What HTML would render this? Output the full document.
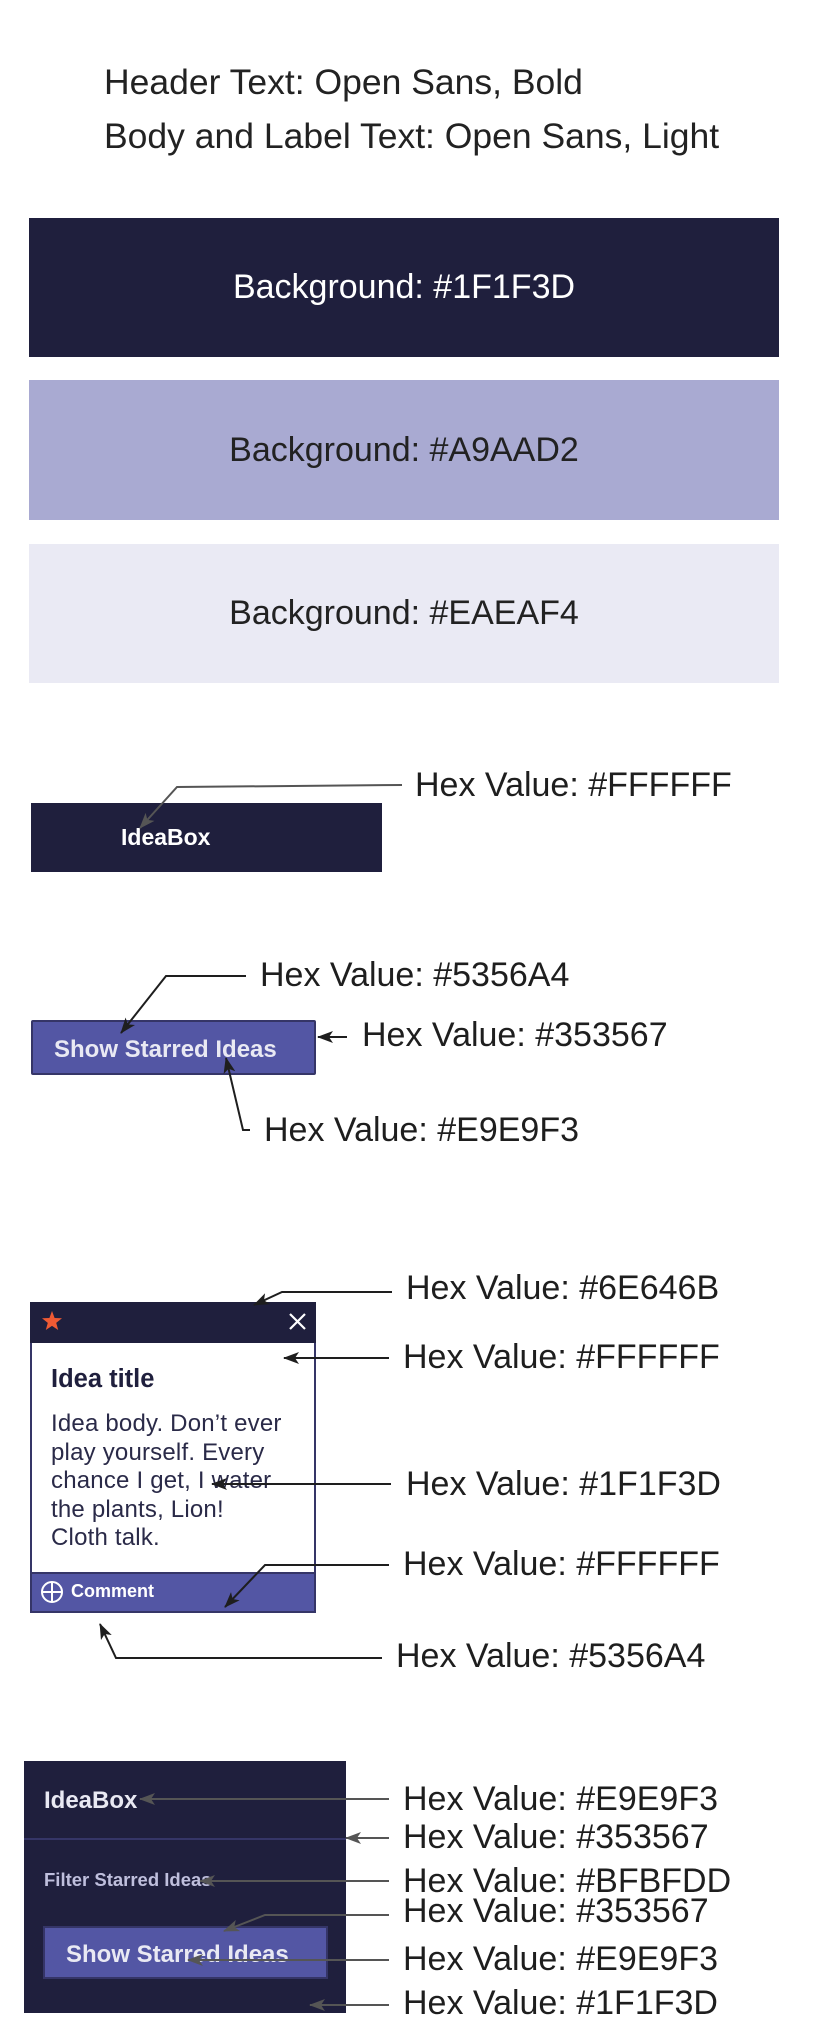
<!DOCTYPE html>
<html><head><meta charset="utf-8"><style>
*{margin:0;padding:0;box-sizing:border-box}
body{width:815px;height:2041px;background:#fff;position:relative;overflow:hidden;font-family:"Liberation Sans",sans-serif;color:#222}
.a{position:absolute;white-space:nowrap;line-height:1}
.lab{font-size:34px;color:#1e1e1e}
.band{position:absolute;left:29px;width:750px;display:flex;align-items:center;justify-content:center;font-size:34px}
.b{font-weight:bold}
</style></head><body>
<div class="a" style="left:104px;top:65px;font-size:35.5px">Header Text: Open Sans, Bold</div>
<div class="a" style="left:104px;top:119px;font-size:35.5px">Body and Label Text: Open Sans, Light</div>

<div class="band" style="top:218px;height:139px;background:#1F1F3D;color:#fff">Background: #1F1F3D</div>
<div class="band" style="top:380px;height:140px;background:#A9AAD2;color:#222">Background: #A9AAD2</div>
<div class="band" style="top:544px;height:139px;background:#EAEAF4;color:#222">Background: #EAEAF4</div>

<div class="a" style="left:31px;top:803px;width:351px;height:69px;background:#1F1F3D"></div>
<div class="a b" style="left:121px;top:826px;font-size:23px;color:#fff">IdeaBox</div>

<div class="a" style="left:31px;top:1020px;width:285px;height:55px;background:#5356A4;border:2px solid #353567;border-radius:2px"></div>
<div class="a b" style="left:54px;top:1038px;font-size:24px;color:#E9E9F3">Show Starred Ideas</div>

<div class="a" style="left:30px;top:1302px;width:286px;height:311px;background:#fff;border:2px solid #353567"></div>
<div class="a" style="left:30px;top:1302px;width:286px;height:41px;background:#1F1F3D"></div>
<div class="a" style="left:30px;top:1572px;width:286px;height:41px;background:#5356A4;border:2px solid #353567"></div>
<div class="a b" style="left:51px;top:1367px;font-size:25.5px;color:#1F1F3D">Idea title</div>
<div class="a" style="left:51px;top:1410px;font-size:24px;line-height:28.5px;color:#2a2a48;white-space:normal;width:260px;letter-spacing:0.2px">Idea body. Don’t ever<br>play yourself. Every<br>chance I get, I water<br>the plants, Lion!<br>Cloth talk.</div>
<div class="a b" style="left:71px;top:1582px;font-size:18px;color:#fff">Comment</div>

<div class="a" style="left:24px;top:1761px;width:322px;height:252px;background:#1F1F3D"></div>
<div class="a" style="left:24px;top:1838px;width:322px;height:2px;background:#353567"></div>
<div class="a b" style="left:44px;top:1789px;font-size:24px;color:#E9E9F3">IdeaBox</div>
<div class="a b" style="left:44px;top:1871px;font-size:18.5px;color:#BFBFDD">Filter Starred Ideas</div>
<div class="a" style="left:43px;top:1926px;width:285px;height:53px;background:#5356A4;border:2px solid #353567"></div>
<div class="a b" style="left:66px;top:1943px;font-size:24px;color:#E9E9F3">Show Starred Ideas</div>

<div class="a lab" style="left:415px;top:768px">Hex Value: #FFFFFF</div>
<div class="a lab" style="left:260px;top:958px">Hex Value: #5356A4</div>
<div class="a lab" style="left:362px;top:1018px">Hex Value: #353567</div>
<div class="a lab" style="left:264px;top:1113px">Hex Value: #E9E9F3</div>
<div class="a lab" style="left:406px;top:1271px">Hex Value: #6E646B</div>
<div class="a lab" style="left:403px;top:1340px">Hex Value: #FFFFFF</div>
<div class="a lab" style="left:406px;top:1467px">Hex Value: #1F1F3D</div>
<div class="a lab" style="left:403px;top:1547px">Hex Value: #FFFFFF</div>
<div class="a lab" style="left:396px;top:1639px">Hex Value: #5356A4</div>
<div class="a lab" style="left:403px;top:1782px">Hex Value: #E9E9F3</div>
<div class="a lab" style="left:403px;top:1820px">Hex Value: #353567</div>
<div class="a lab" style="left:403px;top:1864px">Hex Value: #BFBFDD</div>
<div class="a lab" style="left:403px;top:1894px">Hex Value: #353567</div>
<div class="a lab" style="left:403px;top:1942px">Hex Value: #E9E9F3</div>
<div class="a lab" style="left:403px;top:1986px">Hex Value: #1F1F3D</div>

<svg class="a" style="left:0;top:0" width="815" height="2041" viewBox="0 0 815 2041">
<defs>
<marker id="k" markerWidth="16" markerHeight="12" refX="15" refY="6" orient="auto" markerUnits="userSpaceOnUse"><path d="M0,0 L16,6 L0,12 L4,6 Z" fill="#1e1e1e"/></marker>
<marker id="g" markerWidth="16" markerHeight="12" refX="15" refY="6" orient="auto" markerUnits="userSpaceOnUse"><path d="M0,0 L16,6 L0,12 L4,6 Z" fill="#555"/></marker>
</defs>
<g fill="none" stroke-width="2">
<polyline points="402,785 177,787 140,828" stroke="#555" marker-end="url(#g)"/>
<polyline points="246,976 166,976 121,1033" stroke="#1e1e1e" marker-end="url(#k)"/>
<polyline points="347,1037 318,1037" stroke="#1e1e1e" marker-end="url(#k)"/>
<polyline points="250,1130 243,1130 226,1058" stroke="#1e1e1e" marker-end="url(#k)"/>
<polyline points="392,1292 282,1292 254,1305" stroke="#1e1e1e" marker-end="url(#k)"/>
<polyline points="389,1358 284,1358" stroke="#1e1e1e" marker-end="url(#k)"/>
<polyline points="391,1484 212,1484" stroke="#1e1e1e" marker-end="url(#k)"/>
<polyline points="389,1565 265,1565 225,1607" stroke="#1e1e1e" marker-end="url(#k)"/>
<polyline points="382,1658 116,1658 100,1624" stroke="#1e1e1e" marker-end="url(#k)"/>
<polyline points="389,1799 140,1799" stroke="#555" marker-end="url(#g)"/>
<polyline points="389,1838 346,1838" stroke="#555" marker-end="url(#g)"/>
<polyline points="389,1881 200,1881" stroke="#555" marker-end="url(#g)"/>
<polyline points="389,1915 265,1915 224,1931" stroke="#555" marker-end="url(#g)"/>
<polyline points="389,1960 188,1960" stroke="#555" marker-end="url(#g)"/>
<polyline points="389,2005 310,2005" stroke="#555" marker-end="url(#g)"/>
</g>
<path d="M52,1311 L54.6,1318 L62,1318.3 L56.2,1322.9 L58.2,1330 L52,1325.9 L45.8,1330 L47.8,1322.9 L42,1318.3 L49.4,1318 Z" fill="#F05A34"/>
<path d="M290,1314 L305,1329 M305,1314 L290,1329" stroke="#fff" stroke-width="2.2"/>
<circle cx="52" cy="1592" r="10" fill="none" stroke="#fff" stroke-width="2"/>
<path d="M52,1583 V1601 M43,1592 H61" stroke="#fff" stroke-width="2"/>
</svg>
</body></html>
